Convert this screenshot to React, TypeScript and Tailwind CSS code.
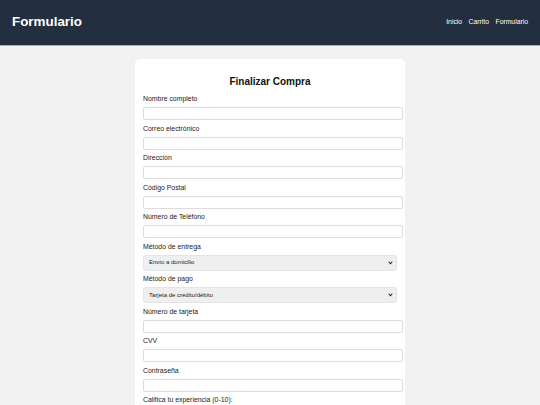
import React, { useState } from 'react';

const fieldsTop = [
  { id: 'nombre', label: 'Nombre completo', type: 'text' },
  { id: 'correo', label: 'Correo electrónico', type: 'email' },
  { id: 'direccion', label: 'Dirección', type: 'text' },
  { id: 'cp', label: 'Código Postal', type: 'text' },
  { id: 'telefono', label: 'Número de Teléfono', type: 'tel' },
];

const fieldsBottom = [
  { id: 'tarjeta', label: 'Número de tarjeta', type: 'text' },
  { id: 'cvv', label: 'CVV', type: 'text' },
  { id: 'password', label: 'Contraseña', type: 'password' },
];

function Field({ id, label, type }: { id: string; label: string; type: string }) {
  return (
    <div className="mb-[4.5px]">
      <label htmlFor={id} className="block text-[6.9px] leading-[8px] text-[#1a1a1a] mb-[4px]">
        {label}
      </label>
      <input
        id={id}
        type={type}
        className="block h-[13px] w-[260px] rounded-[2px] border border-[#dcdcdc] bg-white px-[3px] text-[6.8px] focus:outline-none"
      />
    </div>
  );
}

function SelectField({ id, label, options }: { id: string; label: string; options: string[] }) {
  const [value, setValue] = useState(options[0]);
  return (
    <div className="mb-[4.5px]">
      <label htmlFor={id} className="block text-[6.9px] leading-[8px] text-[#1a1a1a] mb-[4px]">
        {label}
      </label>
      <div className="relative">
        <select
          id={id}
          value={value}
          onChange={(e) => setValue(e.target.value)}
          className="block h-[16px] w-full appearance-none rounded-[3px] border border-[#e4e4e4] bg-[#efefef] pl-[5px] text-[6px] text-[#1a1a1a] focus:outline-none"
        >
          {options.map((o) => (
            <option key={o}>{o}</option>
          ))}
        </select>
        <svg
          className="pointer-events-none absolute right-[4px] top-[6px]"
          width="5"
          height="4"
          viewBox="0 0 10 8"
        >
          <path d="M1.5 1.5 L5 5.5 L8.5 1.5" fill="none" stroke="#222" strokeWidth="2.2" />
        </svg>
      </div>
    </div>
  );
}

export default function App() {
  const [rating, setRating] = useState(5);

  return (
    <div className="min-h-screen bg-[#f2f2f2]" style={{ fontFamily: '"Liberation Sans", Arial, sans-serif' }}>
      {/* Header */}
      <header className="flex h-[46px] items-center justify-between border-b border-[#aab0b8] bg-[#232f3e] px-[12px]">
        <h1 className="text-[13.4px] font-bold text-white">Formulario</h1>
        <nav className="flex gap-[6.5px] text-[6.8px] text-white">
          <a href="#" className="text-white">Inicio</a>
          <a href="#" className="text-white">Carrito</a>
          <a href="#" className="text-white">Formulario</a>
        </nav>
      </header>

      {/* Form card */}
      <main className="pt-[13px] pb-6">
        <form
          className="mx-auto w-[270px] rounded-[5px] bg-white px-[8px] pt-[17px] pb-4"
          onSubmit={(e) => e.preventDefault()}
        >
          <h2 className="mb-[7px] text-center text-[10px] font-bold leading-[12px] text-[#111]">
            Finalizar Compra
          </h2>

          {fieldsTop.map((f) => (
            <Field key={f.id} {...f} />
          ))}

          <SelectField id="entrega" label="Método de entrega" options={['Envío a domicilio', 'Recoger en tienda']} />
          <SelectField id="pago" label="Método de pago" options={['Tarjeta de crédito/débito', 'PayPal', 'Transferencia']} />

          {fieldsBottom.map((f) => (
            <Field key={f.id} {...f} />
          ))}

          <div className="mb-[4.5px]">
            <label htmlFor="rating" className="block text-[6.9px] leading-[8px] text-[#1a1a1a] mb-[4px]">
              Califica tu experiencia (0-10):
            </label>
            <input
              id="rating"
              type="range"
              min={0}
              max={10}
              value={rating}
              onChange={(e) => setRating(Number(e.target.value))}
              className="block w-full"
            />
          </div>

          <button type="submit" className="mt-2 w-full rounded-[3px] bg-[#232f3e] py-[4px] text-[7px] text-white">
            Confirmar compra
          </button>
        </form>
      </main>
    </div>
  );
}
